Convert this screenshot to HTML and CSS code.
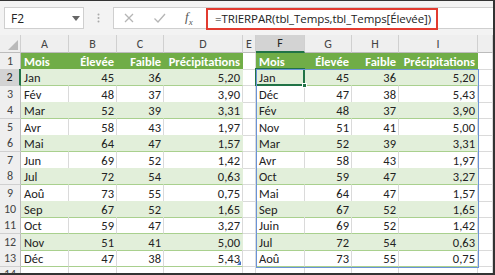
FILE: index.html
```html
<!DOCTYPE html>
<html lang="fr">

<head>
    <meta charset="utf-8">
    <title>Feuil1</title>
    <link rel="stylesheet" href="styles.css">
</head>

<body>
    <div class="window">
        <div class="formula-bar">
            <div class="name-box">
                <span>F2</span>
                <svg width="8" height="5" viewBox="0 0 8 5"><path d="M0 0h8L4 5z" fill="#666" /></svg>
            </div>
            <div class="grip">
                <svg width="3" height="10" viewBox="0 0 3 10"><circle cx="1.5" cy="1.5" r="1" fill="#aaa" /><circle cx="1.5" cy="5" r="1" fill="#aaa" /><circle cx="1.5" cy="8.5" r="1" fill="#aaa" /></svg>
            </div>
            <div class="input">
                <div class="buttons">
                    <svg class="btn" width="12" height="12" viewBox="0 0 12 12"><path d="M2 2l8 8M10 2l-8 8" stroke="#b5b5b5" stroke-width="1.3" fill="none" /></svg>
                    <svg class="btn" width="13" height="12" viewBox="0 0 13 12"><path d="M1.5 6.5l3.5 3.5 7-8" stroke="#b5b5b5" stroke-width="1.3" fill="none" /></svg>
                    <span class="fx">f<sub>x</sub></span>
                </div>
                <div class="formula">=TRIERPAR(tbl_Temps,tbl_Temps[Élevée])</div>
            </div>
        </div>

        <div class="sheet">
            <!-- column letters -->
            <div class="row head">
                <div class="hd corner"><svg width="10" height="10" viewBox="0 0 10 10"><path d="M10 0v10H0z" fill="#b9b9b9" /></svg></div>
                <div class="hd">A</div>
                <div class="hd">B</div>
                <div class="hd">C</div>
                <div class="hd">D</div>
                <div class="hd">E</div>
                <div class="hd active">F</div>
                <div class="hd">G</div>
                <div class="hd">H</div>
                <div class="hd">I</div>
                <div class="hd"></div>
            </div>

            <div class="row">
                <div class="rh">1</div>
                <div class="c th">Mois</div>
                <div class="c th n">Élevée</div>
                <div class="c th n">Faible</div>
                <div class="c th n">Précipitations</div>
                <div class="c"></div>
                <div class="c th">Mois</div>
                <div class="c th n">Élevée</div>
                <div class="c th n">Faible</div>
                <div class="c th n">Précipitations</div>
                <div class="c"></div>
            </div>

            <div class="row band">
                <div class="rh active">2</div>
                <div class="c t">Jan</div><div class="c t n">45</div><div class="c t n">36</div><div class="c t n">5,20</div>
                <div class="c"></div>
                <div class="c t selected">Jan<span class="handle"></span></div><div class="c t n">45</div><div class="c t n">36</div><div class="c t n">5,20</div>
                <div class="c"></div>
            </div>
            <div class="row">
                <div class="rh">3</div>
                <div class="c t">Fév</div><div class="c t n">48</div><div class="c t n">37</div><div class="c t n">3,90</div>
                <div class="c"></div>
                <div class="c t">Déc</div><div class="c t n">47</div><div class="c t n">38</div><div class="c t n">5,43</div>
                <div class="c"></div>
            </div>
            <div class="row band">
                <div class="rh">4</div>
                <div class="c t">Mar</div><div class="c t n">52</div><div class="c t n">39</div><div class="c t n">3,31</div>
                <div class="c"></div>
                <div class="c t">Fév</div><div class="c t n">48</div><div class="c t n">37</div><div class="c t n">3,90</div>
                <div class="c"></div>
            </div>
            <div class="row">
                <div class="rh">5</div>
                <div class="c t">Avr</div><div class="c t n">58</div><div class="c t n">43</div><div class="c t n">1,97</div>
                <div class="c"></div>
                <div class="c t">Nov</div><div class="c t n">51</div><div class="c t n">41</div><div class="c t n">5,00</div>
                <div class="c"></div>
            </div>
            <div class="row band">
                <div class="rh">6</div>
                <div class="c t">Mai</div><div class="c t n">64</div><div class="c t n">47</div><div class="c t n">1,57</div>
                <div class="c"></div>
                <div class="c t">Mar</div><div class="c t n">52</div><div class="c t n">39</div><div class="c t n">3,31</div>
                <div class="c"></div>
            </div>
            <div class="row">
                <div class="rh">7</div>
                <div class="c t">Jun</div><div class="c t n">69</div><div class="c t n">52</div><div class="c t n">1,42</div>
                <div class="c"></div>
                <div class="c t">Avr</div><div class="c t n">58</div><div class="c t n">43</div><div class="c t n">1,97</div>
                <div class="c"></div>
            </div>
            <div class="row band">
                <div class="rh">8</div>
                <div class="c t">Jul</div><div class="c t n">72</div><div class="c t n">54</div><div class="c t n">0,63</div>
                <div class="c"></div>
                <div class="c t">Oct</div><div class="c t n">59</div><div class="c t n">47</div><div class="c t n">3,27</div>
                <div class="c"></div>
            </div>
            <div class="row">
                <div class="rh">9</div>
                <div class="c t">Aoû</div><div class="c t n">73</div><div class="c t n">55</div><div class="c t n">0,75</div>
                <div class="c"></div>
                <div class="c t">Mai</div><div class="c t n">64</div><div class="c t n">47</div><div class="c t n">1,57</div>
                <div class="c"></div>
            </div>
            <div class="row band">
                <div class="rh">10</div>
                <div class="c t">Sep</div><div class="c t n">67</div><div class="c t n">52</div><div class="c t n">1,65</div>
                <div class="c"></div>
                <div class="c t">Sep</div><div class="c t n">67</div><div class="c t n">52</div><div class="c t n">1,65</div>
                <div class="c"></div>
            </div>
            <div class="row">
                <div class="rh">11</div>
                <div class="c t">Oct</div><div class="c t n">59</div><div class="c t n">47</div><div class="c t n">3,27</div>
                <div class="c"></div>
                <div class="c t">Juin</div><div class="c t n">69</div><div class="c t n">52</div><div class="c t n">1,42</div>
                <div class="c"></div>
            </div>
            <div class="row band">
                <div class="rh">12</div>
                <div class="c t">Nov</div><div class="c t n">51</div><div class="c t n">41</div><div class="c t n">5,00</div>
                <div class="c"></div>
                <div class="c t">Jul</div><div class="c t n">72</div><div class="c t n">54</div><div class="c t n">0,63</div>
                <div class="c"></div>
            </div>
            <div class="row">
                <div class="rh">13</div>
                <div class="c t">Déc</div><div class="c t n">47</div><div class="c t n">38</div><div class="c t n resize">5,43</div>
                <div class="c"></div>
                <div class="c t">Aoû</div><div class="c t n">73</div><div class="c t n">55</div><div class="c t n">0,75</div>
                <div class="c"></div>
            </div>
            <div class="row">
                <div class="rh">14</div>
                <div class="c"></div><div class="c"></div><div class="c"></div><div class="c"></div>
                <div class="c"></div>
                <div class="c"></div><div class="c"></div><div class="c"></div><div class="c"></div>
                <div class="c"></div>
            </div>

            <!-- spill range outline F2:I13 -->
            <div class="spill"></div>
        </div>
    </div>
</body>

</html>
```

FILE: styles.css
```css
* {
    margin: 0;
    padding: 0;
    box-sizing: border-box;
}

body {
    background: #fff;
}

.window {
    width: 495px;
    height: 275px;
    overflow: hidden;
    border-top: 1px solid #333;
    border-right: 2px solid #333;
    border-bottom: 2px solid #333;
    background: #f3f3f3;
    display: flex;
    flex-direction: column;
}

/* formula bar */

.formula-bar {
    height: 34px;
    flex: none;
    display: flex;
    align-items: flex-start;
    padding-top: 6px;
    padding-left: 4px;
}

.name-box {
    width: 80px;
    height: 22px;
    background: #fff;
    border: 1px solid #cfcfcf;
    display: flex;
    align-items: center;
    justify-content: space-between;
    padding: 0 3px 0 6px;
    font-family: "Open Sans", "Noto Sans", sans-serif;
    font-size: 12px;
    color: #222;
}

.grip {
    width: 29px;
    height: 22px;
    display: flex;
    align-items: center;
    justify-content: center;
}

.input {
    flex: 1;
    height: 22px;
    background: #fff;
    border: 1px solid #cfcfcf;
    border-right: none;
    display: flex;
    align-items: center;
}

.buttons {
    width: 92px;
    height: 100%;
    display: flex;
    align-items: center;
    padding-left: 9px;
    gap: 18px;
}

.fx {
    font-family: "Liberation Serif", serif;
    font-style: italic;
    font-size: 13px;
    color: #555;
    margin-left: 1px;
}

.fx sub {
    font-size: 9px;
}

.formula {
    width: 232px;
    height: 22px;
    margin-top: 1px;
    border: 2px solid #e23b30;
    padding-left: 7px;
    display: flex;
    align-items: center;
    font-family: "Open Sans", "Noto Sans", sans-serif;
    font-size: 11.5px;
    letter-spacing: -0.1px;
    color: #222;
    white-space: nowrap;
}

/* grid */

.sheet {
    position: relative;
    flex: 1;
    background: #fff;
    font-family: Carlito, Lato, "Liberation Sans", sans-serif;
    font-size: 12.5px;
    color: #222;
}

.row {
    display: grid;
    grid-template-columns: 21px 48px 48px 47px 79px 13px 49px 47px 47px 79px 1fr;
    height: 16.45px;
}

.row.head {
    height: 18px;
}

.hd,
.rh {
    background: #efefef;
    color: #444;
    display: flex;
    align-items: center;
    justify-content: center;
    font-size: 12px;
}

.hd {
    border-right: 1px solid #d0d0d0;
    border-bottom: 1px solid #bcbcbc;
}

.hd.corner {
    align-items: flex-end;
    justify-content: flex-end;
    padding: 0 2px 2px 0;
}

.hd.active {
    background: #d3d3d3;
    color: #222;
    border-bottom: 2px solid #217346;
}

.rh {
    border-right: 1px solid #bcbcbc;
    border-bottom: 1px solid #d0d0d0;
}

.rh.active {
    background: #d3d3d3;
    color: #222;
    border-right: 2px solid #217346;
}

.c {
    border-right: 1px solid #dadada;
    border-bottom: 1px solid #dadada;
    display: flex;
    align-items: center;
    padding: 1px 2px 0 3px;
    white-space: nowrap;
    overflow: visible;
}

.c.n {
    justify-content: flex-end;
}

.c.th {
    background: #70ad47;
    border-right-color: #70ad47;
    border-bottom-color: #70ad47;
    color: #fff;
    font-weight: bold;
}

.c.t {
    border-bottom-color: #a9d08e;
}

.band .c.t {
    background: #e2efda;
    border-right-color: #e2efda;
}

.selected {
    position: relative;
}

.selected::after {
    content: "";
    position: absolute;
    left: -1px;
    top: -1px;
    right: -1px;
    bottom: -1px;
    border: 2px solid #217346;
}

.handle {
    position: absolute;
    right: -3px;
    bottom: -3px;
    width: 5px;
    height: 5px;
    background: #217346;
    border: 1px solid #fff;
    z-index: 2;
}

.resize {
    position: relative;
}

.resize::after {
    content: "";
    position: absolute;
    right: 1px;
    bottom: 1px;
    border-left: 4px solid transparent;
    border-bottom: 4px solid #4472c4;
}

.spill {
    position: absolute;
    left: 256px;
    top: 34.45px;
    width: 223px;
    height: 198.4px;
    border: 1px solid #6a93d8;
    pointer-events: none;
}
```
